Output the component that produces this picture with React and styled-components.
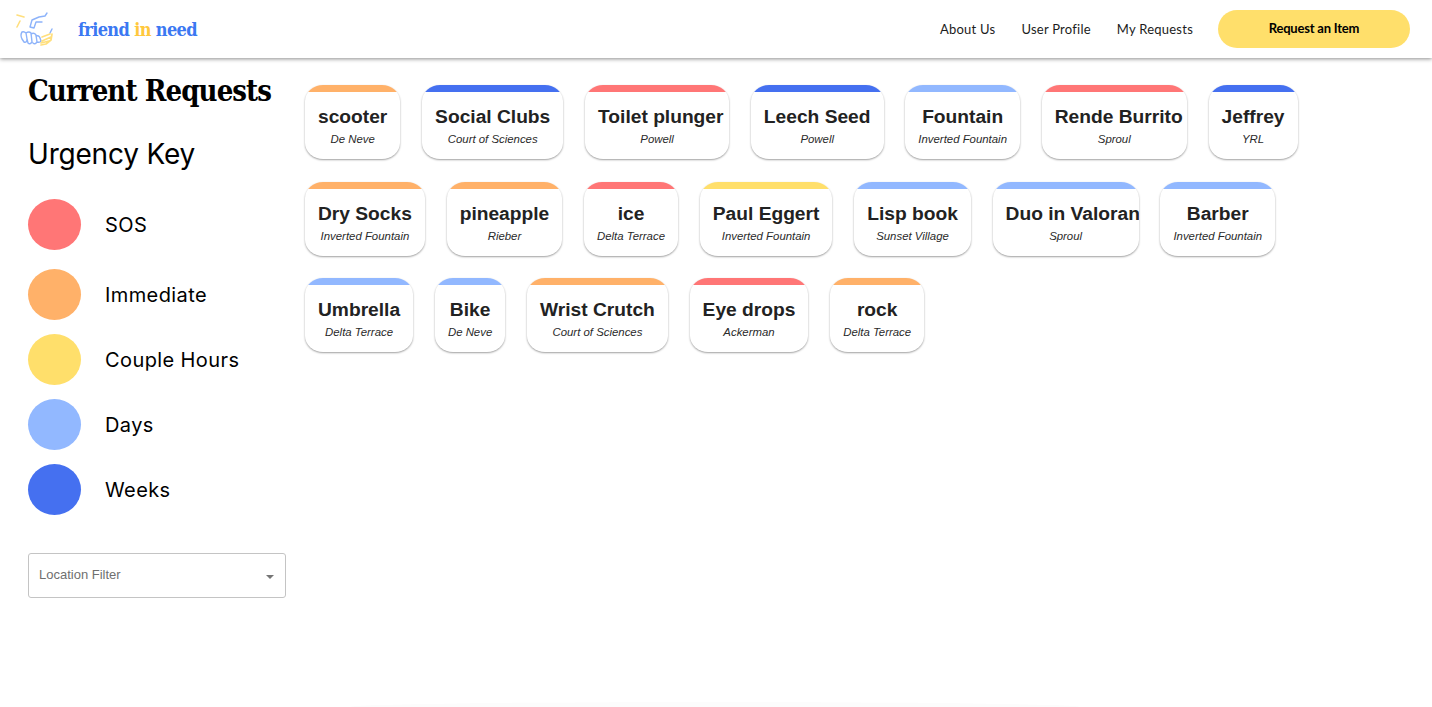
import styled, { createGlobalStyle } from "styled-components"

const colors = {
  sos: "#ff7676",
  immediate: "#ffb169",
  hours: "#ffdf6b",
  days: "#92b8ff",
  weeks: "#4570f0",
}

const keyRows = [
  { label: "SOS", level: "sos", mt: 0 },
  { label: "Immediate", level: "immediate", mt: 19 },
  { label: "Couple Hours", level: "hours", mt: 14 },
  { label: "Days", level: "days", mt: 14 },
  { label: "Weeks", level: "weeks", mt: 14 },
]

const requests = [
  { name: "scooter", place: "De Neve", level: "immediate" },
  { name: "Social Clubs", place: "Court of Sciences", level: "weeks" },
  { name: "Toilet plunger", place: "Powell", level: "sos", maxW: 144 },
  { name: "Leech Seed", place: "Powell", level: "weeks" },
  { name: "Fountain", place: "Inverted Fountain", level: "days" },
  { name: "Rende Burrito", place: "Sproul", level: "sos", maxW: 145 },
  { name: "Jeffrey", place: "YRL", level: "weeks" },
  { name: "Dry Socks", place: "Inverted Fountain", level: "immediate" },
  { name: "pineapple", place: "Rieber", level: "immediate" },
  { name: "ice", place: "Delta Terrace", level: "sos" },
  { name: "Paul Eggert", place: "Inverted Fountain", level: "hours" },
  { name: "Lisp book", place: "Sunset Village", level: "days" },
  { name: "Duo in Valorant", place: "Sproul", level: "days", maxW: 146 },
  { name: "Barber", place: "Inverted Fountain", level: "days" },
  { name: "Umbrella", place: "Delta Terrace", level: "days" },
  { name: "Bike", place: "De Neve", level: "days" },
  { name: "Wrist Crutch", place: "Court of Sciences", level: "immediate" },
  { name: "Eye drops", place: "Ackerman", level: "sos" },
  { name: "rock", place: "Delta Terrace", level: "immediate" },
]

const Global = createGlobalStyle`
  html, body { margin: 0; padding: 0; background: #fff; }
  body { height: 707px; overflow: hidden; font-family: "Liberation Sans", Arial, sans-serif; }
`

const Navbar = styled.header`
  height: 58px;
  display: flex;
  align-items: center;
  justify-content: space-between;
  padding: 0 22px 0 14px;
  background: #fff;
  box-shadow: 0 1px 4px rgba(0, 0, 0, 0.45);
  position: relative;
`

const Brand = styled.div`
  display: flex;
  align-items: center;
  gap: 24px;
`

const BrandName = styled.span`
  font-family: "DejaVu Serif Condensed", "DejaVu Serif", serif;
  font-weight: 700;
  font-size: 18px;
  letter-spacing: -0.65px;
  color: #3b78f2;
`

const BrandAccent = styled.span`
  color: #ffc83d;
`

const NavLinks = styled.nav`
  display: flex;
  align-items: center;
  gap: 26px;
`

const NavLink = styled.a`
  font-family: Lato, sans-serif;
  font-size: 13px;
  letter-spacing: 0.24px;
  color: #1c1c1c;
`

const RequestButton = styled.button`
  width: 192px;
  height: 38px;
  margin-left: -1px;
  margin-bottom: 1px;
  padding: 0 0 2px;
  border: none;
  border-radius: 19px;
  background: ${colors.hours};
  color: #000;
  font-family: Lato, sans-serif;
  font-weight: 700;
  font-size: 13px;
  letter-spacing: -0.2px;
`

const Page = styled.main`
  display: flex;
  padding-left: 28px;
`

const Sidebar = styled.aside`
  width: 258px;
  flex: none;
`

const Title = styled.h1`
  margin: 15px 0 0;
  font-family: "DejaVu Serif Condensed", "DejaVu Serif", serif;
  font-weight: 700;
  font-size: 29px;
  line-height: 36px;
  letter-spacing: -0.9px;
  white-space: nowrap;
  color: #000;
`

const KeyTitle = styled.h2`
  margin: 25px 0 0;
  font-family: Inter, sans-serif;
  font-weight: 400;
  font-size: 28px;
  line-height: 40px;
  letter-spacing: -0.2px;
  color: #000;
`

const KeyList = styled.div`
  margin-top: 25px;
  display: flex;
  flex-direction: column;
`

const KeyRow = styled.div`
  display: flex;
  align-items: center;
  gap: 24px;
  margin-top: ${({ $mt }) => $mt}px;
`

const Dot = styled.span`
  width: 53px;
  height: 51px;
  border-radius: 50%;
  background: ${({ $level }) => colors[$level]};
`

const KeyLabel = styled.span`
  font-family: Inter, sans-serif;
  font-weight: 400;
  font-size: 20px;
  letter-spacing: 0.4px;
  color: #000;
`

const Select = styled.div`
  margin-top: 38px;
  height: 41px;
  padding: 0 11px 2px 10px;
  border: 1px solid #c4c4c4;
  border-radius: 3px;
  display: flex;
  align-items: center;
  justify-content: space-between;
  color: #6f6f6f;
  font-size: 13px;
`

const Caret = styled.span`
  width: 0;
  height: 0;
  margin-top: 4px;
  border-left: 4px solid transparent;
  border-right: 4px solid transparent;
  border-top: 4px solid #757575;
`

const CardGrid = styled.section`
  width: 1075px;
  margin: 27px 0 0 19px;
  display: flex;
  flex-wrap: wrap;
  align-content: flex-start;
  gap: 22.5px 21.8px;
`

const Card = styled.article`
  box-sizing: border-box;
  height: 74px;
  max-width: ${({ $maxW }) => ($maxW ? `${$maxW}px` : "none")};
  background: #fff;
  border-radius: 18px / 16px;
  box-shadow: 0 1px 2px rgba(0, 0, 0, 0.38);
  overflow: hidden;
  text-align: center;
`

const CardBand = styled.div`
  height: 7px;
  background: ${({ $level }) => colors[$level]};
`

const CardBody = styled.div`
  padding: 0 13px;
`

const CardName = styled.div`
  margin-top: 11px;
  font-size: 19.2px;
  line-height: 28px;
  font-weight: 700;
  color: #222;
  white-space: nowrap;
`

const CardPlace = styled.div`
  margin-top: 1px;
  font-size: 11.4px;
  line-height: 14px;
  font-style: italic;
  color: #2a2a2a;
  white-space: nowrap;
`

const BottomGlow = styled.div`
  position: fixed;
  left: 350px;
  bottom: 0;
  width: 730px;
  height: 5px;
  background: #fcfcfc;
  border-radius: 50% 50% 0 0 / 100% 100% 0 0;
`

const Logo = () => (
  <svg width="40" height="38" viewBox="0 0 40 38" fill="none" strokeLinecap="round" strokeLinejoin="round">
    <path d="M3 5 L10 7 M6 11 L3 17" stroke="#ffdf7d" strokeWidth="1.6" />
    <path d="M33 3 L31 6 L25 7 L18 10 L16 17 L20 18 L22 12 L28 12 M38 19 L36 23" stroke="#8db3fa" strokeWidth="1.4" />
    <path
      d="M8 22 Q6 25 8 29 L10 32 Q13 33 13 29 L12 23 Q10 21 8 22 Z M12 23 Q15 21 17 23 L18 32 Q16 35 14 33 L13 29 M17 24 Q20 22 22 25 L23 32 Q21 35 19 33 M22 26 Q25 25 26 28 L27 31 Q26 33 23 32"
      stroke="#8db3fa"
      strokeWidth="1.4"
    />
    <path d="M27 35 L32 34 L37 30 L38 24 M28 27 L36 24 M28 31 L37 27 M27 33 L35 31" stroke="#ffdf7d" strokeWidth="1.7" />
  </svg>
)

const App = () => {
  return (
    <>
      <Global />
      <Navbar>
        <Brand>
          <Logo />
          <BrandName>friend <BrandAccent>in</BrandAccent> need</BrandName>
        </Brand>
        <NavLinks>
          <NavLink>About Us</NavLink>
          <NavLink>User Profile</NavLink>
          <NavLink>My Requests</NavLink>
          <RequestButton>Request an Item</RequestButton>
        </NavLinks>
      </Navbar>
      <Page>
        <Sidebar>
          <Title>Current Requests</Title>
          <KeyTitle>Urgency Key</KeyTitle>
          <KeyList>
            {keyRows.map((row) => (
              <KeyRow key={row.label} $mt={row.mt}>
                <Dot $level={row.level} />
                <KeyLabel>{row.label}</KeyLabel>
              </KeyRow>
            ))}
          </KeyList>
          <Select>
            Location Filter
            <Caret />
          </Select>
        </Sidebar>
        <CardGrid>
          {requests.map((r) => (
            <Card key={r.name} $maxW={r.maxW}>
              <CardBand $level={r.level} />
              <CardBody>
                <CardName>{r.name}</CardName>
                <CardPlace>{r.place}</CardPlace>
              </CardBody>
            </Card>
          ))}
        </CardGrid>
      </Page>
      <BottomGlow />
    </>
  )
}

export default App
